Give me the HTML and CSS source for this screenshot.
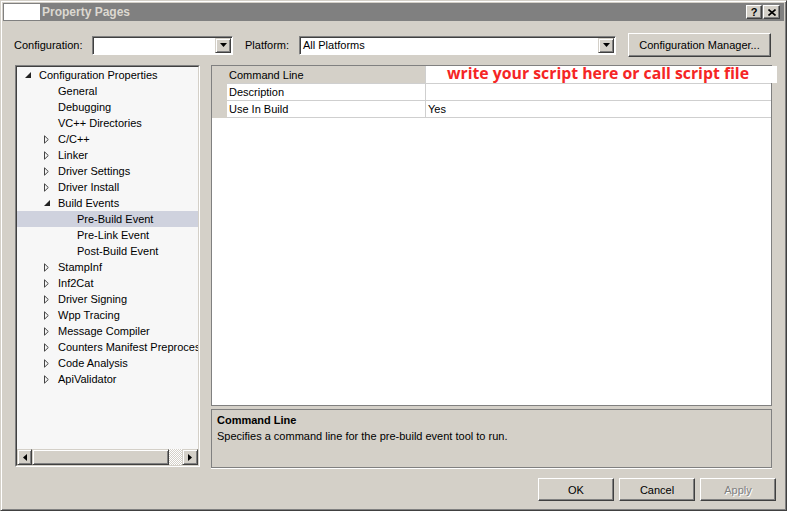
FILE: index.html
```html
<!DOCTYPE html>
<html lang="en">
<head>
  <meta charset="UTF-8" />
  <title>Property Pages</title>
  <link rel="stylesheet" href="styles.css">
</head>
<body>
  <div class="window">

    <!-- TITLE BAR -->
    <div class="titlebar">
      <div class="title-icon"></div>
      <div class="title-text">Property Pages</div>
      <div class="title-buttons">
        <div class="cap-btn cap-help">?</div>
        <div class="cap-btn cap-close">
          <svg width="8" height="7" viewBox="0 0 8 7"><path d="M0.5 0.5 L7.5 6.5 M7.5 0.5 L0.5 6.5" stroke="#000" stroke-width="1.6"/></svg>
        </div>
      </div>
    </div>

    <!-- CONFIGURATION ROW -->
    <div class="config-row">
      <span class="lbl lbl-config">Configuration:</span>
      <div class="combo combo-config">
        <div class="combo-text"></div>
        <div class="combo-btn"><svg width="7" height="4" viewBox="0 0 7 4"><path d="M0 0 H7 L3.5 4 Z" fill="#000"/></svg></div>
      </div>
      <span class="lbl lbl-platform">Platform:</span>
      <div class="combo combo-platform">
        <div class="combo-text">All Platforms</div>
        <div class="combo-btn"><svg width="7" height="4" viewBox="0 0 7 4"><path d="M0 0 H7 L3.5 4 Z" fill="#000"/></svg></div>
      </div>
      <div class="btn btn-manager">Configuration Manager...</div>
    </div>

    <!-- MAIN -->
    <div class="main">

      <div class="tree-outer">
        <div class="tree">
          <div class="tree-rows">
            <div class="node lvl0"><span class="twisty"><svg width="6" height="6" viewBox="0 0 6 6"><path d="M6 0 V6 H0 Z" fill="#222"/></svg></span>Configuration Properties</div>
            <div class="node lvl1"><span class="twisty"></span>General</div>
            <div class="node lvl1"><span class="twisty"></span>Debugging</div>
            <div class="node lvl1"><span class="twisty"></span>VC++ Directories</div>
            <div class="node lvl1"><span class="twisty"><svg width="5" height="9" viewBox="0 0 5 9"><path d="M0.5 0.8 L4.3 4.5 L0.5 8.2 Z" fill="none" stroke="#444"/></svg></span>C/C++</div>
            <div class="node lvl1"><span class="twisty"><svg width="5" height="9" viewBox="0 0 5 9"><path d="M0.5 0.8 L4.3 4.5 L0.5 8.2 Z" fill="none" stroke="#444"/></svg></span>Linker</div>
            <div class="node lvl1"><span class="twisty"><svg width="5" height="9" viewBox="0 0 5 9"><path d="M0.5 0.8 L4.3 4.5 L0.5 8.2 Z" fill="none" stroke="#444"/></svg></span>Driver Settings</div>
            <div class="node lvl1"><span class="twisty"><svg width="5" height="9" viewBox="0 0 5 9"><path d="M0.5 0.8 L4.3 4.5 L0.5 8.2 Z" fill="none" stroke="#444"/></svg></span>Driver Install</div>
            <div class="node lvl1"><span class="twisty"><svg width="6" height="6" viewBox="0 0 6 6"><path d="M6 0 V6 H0 Z" fill="#222"/></svg></span>Build Events</div>
            <div class="node lvl2 selected"><span class="twisty"></span>Pre-Build Event</div>
            <div class="node lvl2"><span class="twisty"></span>Pre-Link Event</div>
            <div class="node lvl2"><span class="twisty"></span>Post-Build Event</div>
            <div class="node lvl1"><span class="twisty"><svg width="5" height="9" viewBox="0 0 5 9"><path d="M0.5 0.8 L4.3 4.5 L0.5 8.2 Z" fill="none" stroke="#444"/></svg></span>StampInf</div>
            <div class="node lvl1"><span class="twisty"><svg width="5" height="9" viewBox="0 0 5 9"><path d="M0.5 0.8 L4.3 4.5 L0.5 8.2 Z" fill="none" stroke="#444"/></svg></span>Inf2Cat</div>
            <div class="node lvl1"><span class="twisty"><svg width="5" height="9" viewBox="0 0 5 9"><path d="M0.5 0.8 L4.3 4.5 L0.5 8.2 Z" fill="none" stroke="#444"/></svg></span>Driver Signing</div>
            <div class="node lvl1"><span class="twisty"><svg width="5" height="9" viewBox="0 0 5 9"><path d="M0.5 0.8 L4.3 4.5 L0.5 8.2 Z" fill="none" stroke="#444"/></svg></span>Wpp Tracing</div>
            <div class="node lvl1"><span class="twisty"><svg width="5" height="9" viewBox="0 0 5 9"><path d="M0.5 0.8 L4.3 4.5 L0.5 8.2 Z" fill="none" stroke="#444"/></svg></span>Message Compiler</div>
            <div class="node lvl1"><span class="twisty"><svg width="5" height="9" viewBox="0 0 5 9"><path d="M0.5 0.8 L4.3 4.5 L0.5 8.2 Z" fill="none" stroke="#444"/></svg></span>Counters Manifest Preprocessor</div>
            <div class="node lvl1"><span class="twisty"><svg width="5" height="9" viewBox="0 0 5 9"><path d="M0.5 0.8 L4.3 4.5 L0.5 8.2 Z" fill="none" stroke="#444"/></svg></span>Code Analysis</div>
            <div class="node lvl1"><span class="twisty"><svg width="5" height="9" viewBox="0 0 5 9"><path d="M0.5 0.8 L4.3 4.5 L0.5 8.2 Z" fill="none" stroke="#444"/></svg></span>ApiValidator</div>
          </div>

          <!-- horizontal scrollbar -->
          <div class="hscroll">
            <div class="sb-btn sb-left"><svg width="4" height="7" viewBox="0 0 4 7"><path d="M4 0 V7 L0 3.5 Z" fill="#000"/></svg></div>
            <div class="sb-thumb"></div>
            <div class="sb-track"></div>
            <div class="sb-btn sb-right"><svg width="4" height="7" viewBox="0 0 4 7"><path d="M0 0 V7 L4 3.5 Z" fill="#000"/></svg></div>
          </div>
        </div>
      </div>

      <div class="right-col">
        <div class="grid">
          <div class="prop-row first active">
            <div class="gutter"></div>
            <div class="prop-name">Command Line</div>
            <div class="prop-value"><span class="note">write your script here or call script file</span></div>
          </div>
          <div class="prop-row">
            <div class="gutter"></div>
            <div class="prop-name">Description</div>
            <div class="prop-value"></div>
          </div>
          <div class="prop-row">
            <div class="gutter"></div>
            <div class="prop-name">Use In Build</div>
            <div class="prop-value">Yes</div>
          </div>
        </div>

        <div class="desc">
          <div class="desc-title">Command Line</div>
          <div class="desc-text">Specifies a command line for the pre-build event tool to run.</div>
        </div>
      </div>
    </div>

    <!-- DIALOG BUTTONS -->
    <div class="dialog-buttons">
      <div class="btn btn-dialog">OK</div>
      <div class="btn btn-dialog">Cancel</div>
      <div class="btn btn-dialog disabled">Apply</div>
    </div>

  </div>
</body>
</html>
```

FILE: styles.css
```css
* {
  box-sizing: border-box;
}

html, body {
  margin: 0;
  padding: 0;
}

body {
  width: 787px;
  height: 511px;
  overflow: hidden;
  background: #d4d0c8;
  font-family: 'Liberation Sans', Arial, sans-serif;
  font-size: 11px;
  color: #000;
}

/* WINDOW FRAME */
.window {
  width: 787px;
  height: 511px;
  padding: 2px;
  border: 1px solid;
  border-color: #d4d0c8 #404040 #404040 #d4d0c8;
  box-shadow: inset 1px 1px #fff, inset -1px -1px #808080;
  display: flex;
  flex-direction: column;
}

/* TITLE BAR */
.titlebar {
  height: 18px;
  background: #808080;
  display: flex;
  align-items: center;
  padding: 0 4px 0 1px;
}

.title-icon {
  width: 36px;
  height: 16px;
  background: #fff;
}

.title-text {
  margin-left: 2px;
  font-size: 12px;
  font-weight: bold;
  color: #dcd8d0;
}

.title-buttons {
  margin-left: auto;
  display: flex;
  gap: 1px;
}

.cap-btn {
  width: 16px;
  height: 14px;
  background: #d4d0c8;
  border: 1px solid;
  border-color: #fff #404040 #404040 #fff;
  box-shadow: inset -1px -1px #808080;
  display: flex;
  align-items: center;
  justify-content: center;
  font-weight: bold;
  font-size: 11px;
  line-height: 1;
}

.cap-close {
  width: 17px;
}

/* CONFIGURATION ROW */
.config-row {
  margin-top: 12px;
  height: 24px;
  display: flex;
  align-items: center;
  padding-left: 11px;
}

.lbl-config {
  width: 78px;
}

.lbl-platform {
  width: 54px;
}

.combo {
  height: 19px;
  background: #fff;
  border: 1px solid;
  border-color: #808080 #fff #fff #808080;
  box-shadow: inset 1px 1px #404040;
  display: flex;
  padding: 1px 1px 1px 2px;
}

.combo-config {
  width: 141px;
  margin-right: 12px;
}

.combo-platform {
  width: 317px;
  margin-right: 12px;
}

.combo-text {
  flex: 1;
  line-height: 15px;
  padding-left: 1px;
}

.combo-btn {
  width: 16px;
  background: #d4d0c8;
  border: 1px solid;
  border-color: #d4d0c8 #404040 #404040 #d4d0c8;
  box-shadow: inset 1px 1px #fff, inset -1px -1px #808080;
  display: flex;
  align-items: center;
  justify-content: center;
}

/* BUTTONS */
.btn {
  background: #d4d0c8;
  border: 1px solid;
  border-color: #fff #404040 #404040 #fff;
  box-shadow: inset -1px -1px #808080;
  display: flex;
  align-items: center;
  justify-content: center;
}

.btn-manager {
  width: 143px;
  height: 24px;
}

.btn-dialog {
  width: 76px;
  height: 23px;
}

.btn-dialog.disabled {
  color: #808080;
  text-shadow: 1px 1px #fff;
}

/* MAIN AREA */
.main {
  margin-top: 8px;
  height: 403px;
  display: grid;
  grid-template-columns: 185px 561px;
  column-gap: 11px;
  padding-left: 12px;
}

/* TREE */
.tree-outer {
  height: 402px;
  border: 1px solid;
  border-color: #808080 #fff #fff #808080;
}

.tree {
  height: 100%;
  border: 1px solid;
  border-color: #404040 #d4d0c8 #d4d0c8 #404040;
  background: #f7f7f7;
  display: flex;
  flex-direction: column;
  overflow: hidden;
}

.tree-rows {
  flex: 1;
}

.node {
  height: 16px;
  line-height: 16px;
  white-space: nowrap;
  display: flex;
  align-items: center;
}

.node.lvl0 {
  padding-left: 8px;
}

.node.lvl1 {
  padding-left: 27px;
}

.node.lvl2 {
  padding-left: 46px;
}

.node.selected {
  background: #cfd2de;
}

.twisty {
  width: 14px;
  flex-shrink: 0;
  display: flex;
  align-items: center;
}

/* SCROLLBAR */
.hscroll {
  height: 16px;
  display: flex;
}

.sb-btn,
.sb-thumb {
  background: #d4d0c8;
  border: 1px solid;
  border-color: #d4d0c8 #404040 #404040 #d4d0c8;
  box-shadow: inset 1px 1px #fff, inset -1px -1px #808080;
}

.sb-btn {
  display: flex;
  align-items: center;
  justify-content: center;
}

.sb-left {
  width: 15px;
}

.sb-right {
  width: 16px;
}

.sb-thumb {
  width: 137px;
}

.sb-track {
  width: 13px;
  background: repeating-conic-gradient(#d4d0c8 0 25%, #fff 0 50%) 0 0 / 2px 2px;
}

/* PROPERTY GRID */
.right-col {
  display: flex;
  flex-direction: column;
  gap: 3px;
}

.grid {
  height: 341px;
  background: #fff;
  border: 1px solid #808080;
}

.prop-row {
  display: flex;
  height: 17px;
}

.prop-row.first {
  height: 18px;
}

.gutter {
  width: 15px;
  flex-shrink: 0;
  background: #d4d0c8;
}

.prop-name,
.prop-value {
  border-bottom: 1px solid #cfcfcf;
  padding-left: 2px;
  white-space: nowrap;
  display: flex;
  align-items: center;
}

.prop-name {
  width: 199px;
  flex-shrink: 0;
  border-right: 1px solid #cfcfcf;
}

.prop-value {
  flex: 1;
  min-width: 0;
}

.prop-row.active .prop-name {
  background: #d4d0c8;
}

.prop-row.active .prop-value {
  padding-left: 0;
  align-items: flex-start;
}

.note {
  display: block;
  flex-shrink: 0;
  width: 351px;
  height: 17px;
  background: #fff;
  padding-left: 21px;
  font-family: 'Open Sans', sans-serif;
  font-weight: bold;
  font-size: 15.8px;
  line-height: 15px;
  color: #f52525;
  position: relative;
  z-index: 1;
}

/* DESCRIPTION */
.desc {
  height: 59px;
  border: 1px solid #808080;
  box-shadow: 0 1px #fff;
  padding: 3px 5px;
}

.desc-title {
  font-weight: bold;
  line-height: 14px;
}

.desc-text {
  margin-top: 2px;
  line-height: 14px;
}

/* DIALOG BUTTONS */
.dialog-buttons {
  margin-top: 10px;
  display: flex;
  justify-content: flex-end;
  gap: 5px;
  padding-right: 8px;
}
```
